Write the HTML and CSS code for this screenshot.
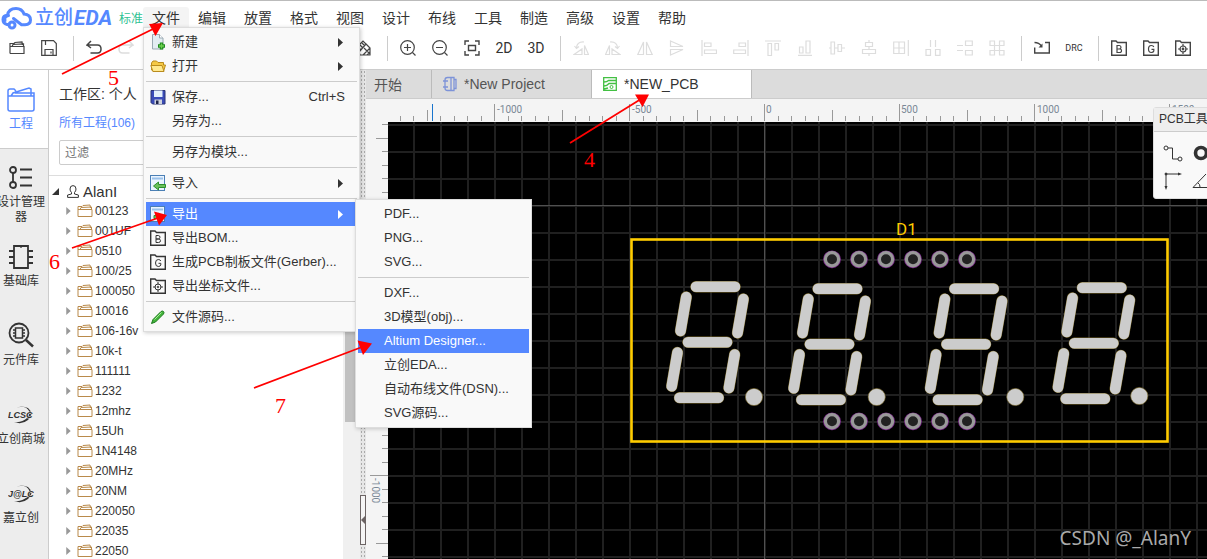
FILE: index.html
```html
<!DOCTYPE html>
<html lang="zh-CN">
<head>
<meta charset="utf-8">
<title>立创EDA</title>
<link rel="stylesheet" href="styles.css">
</head>
<body>
<svg class="defs" width="0" height="0" aria-hidden="true">
  <defs>
    <symbol id="folder" viewBox="0 0 16 16"><path d="M1 13.500V3.500H5L6 2.500L13 2L13.500 5M1 6.500H15V13.500H1M3 6.500L4 4.500L14.500 4V6.500"/></symbol>
    <symbol id="boxB" viewBox="0 0 16 16"><path d="M.7 15.300V1H5L6.500 2.500H15.300V15.300Z" stroke-width="1.400"/><path d="M6 5.500V12.500H8.500Q10.500 12.500 10.500 10.700T8.500 9H6H8.300Q10 8.800 10 7.200T8.300 5.500Z"/></symbol>
    <symbol id="boxG" viewBox="0 0 16 16"><path d="M.7 15.300V1H5L6.500 2.500H15.300V15.300Z" stroke-width="1.400"/><path d="M10.800 7Q10.300 5.500 8.300 5.500Q5.500 5.500 5.500 9T8.300 12.500Q10.300 12.500 10.800 11V9.300H8.500"/></symbol>
    <symbol id="boxT" viewBox="0 0 16 16"><path d="M.7 15.300V1H5L6.500 2.500H15.300V15.300Z" stroke-width="1.400"/><circle cx="8" cy="9" r="3"/><circle cx="8" cy="9" r=".8"/><path d="M8 4V6.500M8 11.500V14M3 9H5.500M10.500 9H13"/></symbol>
    <symbol id="caret" viewBox="0 0 5 9"><path d="M0 0L5 4.500L0 9Z"/></symbol>
    <symbol id="sheet" viewBox="0 0 16 16"><rect x=".5" y=".5" width="14" height="15" fill="#eaf4ff" stroke="#4b7fb5"/><path d="M2 3.500H13" stroke="#9bc2ea" stroke-width="2"/></symbol>
    <g id="segments">
      <path d="M696 286.700H735M688 342.300H727M679.500 397.700H718.500"/>
      <path d="M686.300 297L680.500 331M743.400 299L737.500 333M677.500 352.500L671.700 386.300M734.700 354.500L728.900 388"/>
    </g>
    <g id="digit"><use href="#segments" class="seg-edge"/><use href="#segments" class="seg-face"/></g>
    <g id="pads">
      <circle cx="832" cy="0" r="6.600"/><circle cx="859" cy="0" r="6.600"/><circle cx="886" cy="0" r="6.600"/>
      <circle cx="913" cy="0" r="6.600"/><circle cx="940" cy="0" r="6.600"/><circle cx="967" cy="0" r="6.600"/>
    </g>
    <pattern id="grid" x="764" y="205" width="27" height="27" patternUnits="userSpaceOnUse"><path d="M0 0H27V2H2V27H0Z" fill="#202020"/></pattern>
    <pattern id="hticks" x="128" y="0" width="135" height="23" patternUnits="userSpaceOnUse">
      <path d="M.5 5V22M14.500 17V22M27.500 17V22M41.500 17V22M54.500 17V22M68.500 11V22M81.500 17V22M95.500 17V22M108.500 17V22M122.500 17V22" stroke="#999"/>
    </pattern>
    <pattern id="vticks" x="0" y="83" width="22" height="135" patternUnits="userSpaceOnUse">
      <path d="M4 .5H22M16 14.500H22M16 27.500H22M16 41.500H22M16 54.500H22M10 68.500H22M16 81.500H22M16 95.500H22M16 108.500H22M16 122.500H22" stroke="#999"/>
    </pattern>
  </defs>
</svg>

<div class="app">
  <header class="menubar">
    <div class="logo">
      <svg class="cloud" width="31" height="24" viewBox="0 0 31 24"><path d="M8 18.500H6Q2 17.500 2 13.500T6.500 9.300Q7.500 2.500 15 2.500Q21 2.500 23 8Q29.500 8.500 29.500 14Q29.500 18.500 24 18.800H20.500L12.500 12.500"/><circle cx="11" cy="19" r="3"/><path d="M4 14.500Q3 10.500 7.500 9.500"/></svg>
      <span class="brand">立创<b>EDA</b></span><span class="edition">标准</span>
    </div>
    <nav class="menus">
      <div class="menu-root">
        <button class="open">文件</button>
        <div class="menu">
          <button><svg width="16" height="16" viewBox="0 0 16 16"><path d="M2.500.5H9.500L13 4V15H2.500Z" fill="#e3edf2" stroke="#9aa9b2"/><path d="M9.500.5V4H13" fill="#fff" stroke="#9aa9b2"/><path d="M11.500 8.500V15.500M8 12H15" stroke="#1d8a1d" stroke-width="3.400"/><path d="M11.500 9.500V14.500M9 12H14" stroke="#6fd04f" stroke-width="1.400"/></svg>新建<svg class="more"><use href="#caret"/></svg></button>
          <button><svg width="16" height="16" viewBox="0 0 16 16"><path d="M1.500 12V5L3 3H6.500L8 4.500H13.500V7H15.500L13.500 13.500H3.500Z" fill="#f5c945" stroke="#b98b1d"/><path d="M.8 7.500H12L14 13.500H3Z" fill="#ffe98f" stroke="#b98b1d"/></svg>打开<svg class="more"><use href="#caret"/></svg></button>
          <hr>
          <button><svg width="16" height="16" viewBox="0 0 16 16"><path d="M1 1.500H15V15H2.500L1 13.500Z" fill="#3a4cb8" stroke="#2b3475"/><rect x="4" y="1.500" width="8.500" height="6.500" fill="#e4f1fb"/><rect x="4.500" y="10.500" width="7.500" height="4.500" fill="#cfd3dc"/><rect x="6" y="11.500" width="2.500" height="3.500" fill="#1c2348"/></svg>保存...<kbd>Ctrl+S</kbd></button>
          <button><i></i>另存为...</button>
          <hr>
          <button><i></i>另存为模块...</button>
          <hr>
          <button><svg width="16" height="16" viewBox="0 0 16 16"><use href="#sheet"/><path d="M3.500 11L8.500 7V9.500H15.500V12.500H8.500V15Z" fill="#69c05b" stroke="#2c8f2c"/></svg>导入<svg class="more"><use href="#caret"/></svg></button>
          <hr>
          <button class="active"><svg width="16" height="16" viewBox="0 0 16 16"><use href="#sheet"/><path d="M13 11L8 7V9.500H4V12.500H8V15Z" fill="#69c05b" stroke="#2c8f2c"/></svg>导出<svg class="more"><use href="#caret"/></svg></button>
          <button><svg class="line" width="16" height="16"><use href="#boxB"/></svg>导出BOM...</button>
          <button><svg class="line" width="16" height="16"><use href="#boxG"/></svg>生成PCB制板文件(Gerber)...</button>
          <button><svg class="line" width="16" height="16"><use href="#boxT"/></svg>导出坐标文件...</button>
          <hr>
          <button><svg width="16" height="16" viewBox="0 0 16 16"><path d="M1.500 14.500L3 10.500L11 2.500Q12.500 1.500 13.500 2.500T13.500 5L5.500 13Z" fill="#43b53b" stroke="#1c7a1c"/><path d="M4.500 10.500L11.500 3.500" stroke="#a9ec9a"/></svg>文件源码...</button>
          <div class="menu submenu">
            <button><i></i>PDF...</button>
            <button><i></i>PNG...</button>
            <button><i></i>SVG...</button>
            <hr>
            <button><i></i>DXF...</button>
            <button><i></i>3D模型(obj)...</button>
            <button class="active"><i></i>Altium Designer...</button>
            <button><i></i>立创EDA...</button>
            <button><i></i>自动布线文件(DSN)...</button>
            <button><i></i>SVG源码...</button>
          </div>
        </div>
      </div>
      <button>编辑</button><button>放置</button><button>格式</button><button>视图</button><button>设计</button><button>布线</button><button>工具</button><button>制造</button><button>高级</button><button>设置</button><button>帮助</button>
    </nav>
  </header>

  <div class="toolbar">
    <button aria-label="打开"><svg viewBox="0 0 16 16"><use href="#folder"/></svg></button>
    <button aria-label="保存"><svg viewBox="0 0 16 16"><path d="M.7.700H12.500L15.300 3.500V15.300H.7ZM4 15V9.500H12V15M4.500 1V5M10 11.500V13.500"/></svg></button>
    <span class="sep"></span>
    <button aria-label="撤销"><svg viewBox="0 0 16 16"><path d="M5 1L1 5H11.500Q15 5 15 9T11.500 13H4.500M1 5L5 8" stroke-width="1.500"/></svg></button>
    <button aria-label="重做" disabled><svg viewBox="0 0 16 16"><path d="M11 1L15 5H4.500Q1 5 1 9T4.500 13H11.500M15 5L11 8" stroke-width="1.500"/></svg></button>
    <span class="under-menu"></span>
    <button aria-label="画笔"><svg viewBox="0 0 16 16"><path d="M1 8L8 1L11 4L4 12ZM4 12L11 4L15 8V15H5ZM3 7L6 10M5 5L8 8M7 3L10 6M8 15L15 8M12 15L15 12M9 8L15 14"/></svg></button>
    <span class="sep"></span>
    <button aria-label="放大"><svg viewBox="0 0 16 16"><circle cx="7.500" cy="7.500" r="6.800"/><path d="M4 7.500H11M7.500 4V11M12.500 12.500L15.500 15.500"/></svg></button>
    <button aria-label="缩小"><svg viewBox="0 0 16 16"><circle cx="7.500" cy="7.500" r="6.800"/><path d="M4 7.500H11M12.500 12.500L15.500 15.500"/></svg></button>
    <button aria-label="适合窗口"><svg viewBox="0 0 16 16"><path d="M5 1H1V5M11 1H15V5M1 11V15H5M15 11V15H11M4.500 5.500H11.500V10.500H4.500Z" stroke-width="1.400"/></svg></button>
    <button>2D</button>
    <button>3D</button>
    <span class="sep"></span>
    <button disabled aria-label="左旋"><svg viewBox="0 0 16 16"><path d="M1 14.500L9 9V14.500ZM11.500 5.500L15.500 14.500H11.500ZM3.500 8Q4 1.500 11 2M1.500 6L3.500 8.500L6 6.500"/></svg></button>
    <button disabled aria-label="右旋"><svg viewBox="0 0 16 16"><path d="M15 14.500L7 9V14.500ZM4.500 5.500L.5 14.500H4.500ZM12.500 8Q12 1.500 5 2M14.500 6L12.500 8.500L10 6.500"/></svg></button>
    <button disabled aria-label="水平翻转"><svg viewBox="0 0 16 16"><path d="M6.500 2V14.500H.8ZM9.500 2V14.500H15.200Z"/></svg></button>
    <button disabled aria-label="垂直翻转"><svg viewBox="0 0 16 16"><path d="M1.500 1L14 6.500H1.500ZM1.500 15L14 9.500H1.500Z"/></svg></button>
    <button disabled aria-label="左对齐"><svg viewBox="0 0 16 16"><path d="M1 0V16M3.500 3H10V6.500H3.500ZM3.500 10H15.500V13.500H3.500Z"/></svg></button>
    <button disabled aria-label="右对齐"><svg viewBox="0 0 16 16"><path d="M15 0V16M6 3H12.500V6.500H6ZM.7 10H12.500V13.500H.7Z"/></svg></button>
    <button disabled aria-label="上对齐"><svg viewBox="0 0 16 16"><path d="M0 1H16M3 3.500H6.500V15.500H3ZM10 3.500H13.500V10H10Z"/></svg></button>
    <button disabled aria-label="下对齐"><svg viewBox="0 0 16 16"><path d="M1 15.300H15M2.500 7H6V13H2.500ZM9 1H13V13H9Z"/></svg></button>
    <button disabled aria-label="水平居中"><svg viewBox="0 0 16 16"><path d="M0 8H2M2 2H5.500V14H2ZM5.500 8H9M9 4.500H12.500V11.500H9ZM12.500 8H16"/></svg></button>
    <button disabled aria-label="垂直居中"><svg viewBox="0 0 16 16"><path d="M8 0V2.500M4.500 2.500H11.500V6.500H4.500ZM8 6.500V9.500M1.500 9.500H14.500V13.500H1.500ZM8 13.500V16"/></svg></button>
    <button disabled aria-label="网格对齐"><svg viewBox="0 0 16 16"><path d="M.7 2H11.500V13.500H.7ZM6 2V13.500M.7 8H11.500M15.300 0V16"/></svg></button>
    <button disabled aria-label="水平分布"><svg viewBox="0 0 16 16"><path d="M5.500 0V7M10.500 0V7M1 9.500H5.500V15.300H1ZM10.500 9.500H15V15.300H10.500Z"/></svg></button>
    <button disabled aria-label="垂直分布"><svg viewBox="0 0 16 16"><path d="M0 5.500H6M0 10.500H6M8.500 1H15.300V5.500H8.500ZM8.500 10.500H15.300V15H8.500Z"/></svg></button>
    <button disabled aria-label="阵列"><svg viewBox="0 0 16 16"><path d="M1 1H5.500V5.500H1ZM10.500 1H15V5.500H10.500ZM1 10.500H5.500V15H1ZM10.500 10.500H15V15H10.500ZM5.500 5.500H10.500V10.500H5.500Z"/></svg></button>
    <span class="sep"></span>
    <button aria-label="导入变更"><svg viewBox="0 0 16 16"><path d="M.7 7.500V13H15.300V2.500H11M.5 2.500Q5 2.500 7.500 6" stroke-width="1.400"/><path d="M8.500 3.500V7.500H4.500Z" fill="#444" stroke="none"/></svg></button>
    <button class="drc">DRC</button>
    <span class="sep"></span>
    <button aria-label="BOM"><svg><use href="#boxB"/></svg></button>
    <button aria-label="Gerber"><svg><use href="#boxG"/></svg></button>
    <button aria-label="坐标"><svg><use href="#boxT"/></svg></button>
  </div>

  <div class="body">
    <nav class="rail">
      <button class="current"><svg width="28" height="26" viewBox="0 0 28 26"><path d="M1 9H27V22Q27 24 25 24H3Q1 24 1 22ZM1 9V4Q1 2 3 2H7L9 4M4 9L6 6L22 1L24 2V9M8 6H27V9"/></svg>工程</button>
      <button><svg width="26" height="24" viewBox="0 0 26 24"><circle cx="5" cy="4" r="3"/><circle cx="5" cy="19" r="3"/><path d="M5 7V16M12 3.500H24M12 11.500H24M12 19.500H24"/></svg><span>设计管理<br>器</span></button>
      <button><svg width="26" height="24" viewBox="0 0 26 24"><path d="M6 1H20V23H6ZM1 6H6M1 12H6M1 18H6M20 6H25M20 12H25M20 18H25"/><path d="M11 1Q13 4 15 1" stroke-width="1"/></svg>基础库</button>
      <button class="search"><svg width="28" height="26" viewBox="0 0 28 26"><circle cx="12" cy="11" r="9.500"/><path d="M8.500 6H15.500V16H8.500ZM6 8H8.500M6 11H8.500M6 14H8.500M15.500 8H18M15.500 11H18M15.500 14H18" stroke-width="1.500"/><path d="M19 18L26 24.500" stroke-width="2.500"/></svg>元件库</button>
      <button><svg class="seal" width="26" height="20" viewBox="0 0 26 20"><path d="M4 5Q12-1 20 3Q27 9 20 15Q14 20 6 17Q15 18 20 12Q24 5 16 2Q10 1 4 5Z"/><text x="0" y="13">LCSC</text></svg>立创商城</button>
      <button><svg class="seal" width="26" height="20" viewBox="0 0 26 20"><path d="M4 5Q12-1 20 3Q27 9 20 15Q14 20 6 17Q15 18 20 12Q24 5 16 2Q10 1 4 5Z"/><text x="0" y="13">J@LC</text></svg>嘉立创</button>
    </nav>

    <aside class="panel">
      <div class="panel-head">
        <div class="workspace-name">工作区: 个人</div>
        <a href="#all">所有工程(106)</a>
        <input type="text" placeholder="过滤" aria-label="过滤">
      </div>
      <div class="tree-area">
        <div class="tree">
          <div class="owner"><svg width="7" height="7" viewBox="0 0 7 7"><path d="M7 0V7H0Z" fill="#333"/></svg><svg class="line" width="12" height="13" viewBox="0 0 12 13"><path d="M6 .6Q9 .6 9 4Q9 6 7.500 7.500V9L11.400 10V12.400H.6V10L4.500 9V7.500Q3 6 3 4Q3 .6 6 .6Z"/></svg>AlanI</div>
          <ul>
            <li><svg class="tw"><use href="#caret"/></svg><svg class="fd"><use href="#folder"/></svg>00123</li>
            <li><svg class="tw"><use href="#caret"/></svg><svg class="fd"><use href="#folder"/></svg>001UF</li>
            <li><svg class="tw"><use href="#caret"/></svg><svg class="fd"><use href="#folder"/></svg>0510</li>
            <li><svg class="tw"><use href="#caret"/></svg><svg class="fd"><use href="#folder"/></svg>100/25</li>
            <li><svg class="tw"><use href="#caret"/></svg><svg class="fd"><use href="#folder"/></svg>100050</li>
            <li><svg class="tw"><use href="#caret"/></svg><svg class="fd"><use href="#folder"/></svg>10016</li>
            <li><svg class="tw"><use href="#caret"/></svg><svg class="fd"><use href="#folder"/></svg>106-16v</li>
            <li><svg class="tw"><use href="#caret"/></svg><svg class="fd"><use href="#folder"/></svg>10k-t</li>
            <li><svg class="tw"><use href="#caret"/></svg><svg class="fd"><use href="#folder"/></svg>111111</li>
            <li><svg class="tw"><use href="#caret"/></svg><svg class="fd"><use href="#folder"/></svg>1232</li>
            <li><svg class="tw"><use href="#caret"/></svg><svg class="fd"><use href="#folder"/></svg>12mhz</li>
            <li><svg class="tw"><use href="#caret"/></svg><svg class="fd"><use href="#folder"/></svg>15Uh</li>
            <li><svg class="tw"><use href="#caret"/></svg><svg class="fd"><use href="#folder"/></svg>1N4148</li>
            <li><svg class="tw"><use href="#caret"/></svg><svg class="fd"><use href="#folder"/></svg>20MHz</li>
            <li><svg class="tw"><use href="#caret"/></svg><svg class="fd"><use href="#folder"/></svg>20NM</li>
            <li><svg class="tw"><use href="#caret"/></svg><svg class="fd"><use href="#folder"/></svg>220050</li>
            <li><svg class="tw"><use href="#caret"/></svg><svg class="fd"><use href="#folder"/></svg>22035</li>
            <li><svg class="tw"><use href="#caret"/></svg><svg class="fd"><use href="#folder"/></svg>22050</li>
          </ul>
        </div>
        <div class="track"><div class="thumb"></div></div>
      </div>
    </aside>

    <div class="splitter"><button aria-label="收起"><svg width="4" height="8" viewBox="0 0 4 8"><path d="M4 0V8L0 4Z" fill="#6b6363"/></svg></button></div>

    <main class="editor">
      <div class="tabs">
        <button>开始</button>
        <button class="doc"><svg width="16" height="16" viewBox="0 0 16 16"><path d="M9 1.500H5.500Q3 1.500 3 4V12Q3 14.500 5.500 14.500H9M9 1.500H12V14.500H9ZM1 5H6M1 11H6M12 3.500H14V12.500H12" stroke="#7d93d8" fill="none" stroke-width="1.300"/></svg>*New Project</button>
        <button class="doc current"><svg width="16" height="16" viewBox="0 0 16 16"><path d="M1.700 1.700H14.300V14.300H1.700ZM2 6Q5 6 6.500 4.500H14M2 10Q5 10 7 7.500H14M2 13L6 12" stroke="#43c043" fill="none" stroke-width="1.300"/><circle cx="9.500" cy="11" r="1.500" stroke="#43c043" fill="none"/></svg>*NEW_PCB</button>
      </div>
      <div class="workspace">
        <svg class="ruler-h">
          <rect width="100%" height="23" fill="#f4f4f4"/>
          <rect x="22" width="100%" height="23" fill="url(#hticks)"/>
          <path d="M66.500 5V22" stroke="#1874cd"/>
          <g class="marks"><text x="131" y="14">-1000</text><text x="266" y="14">-500</text><text x="400" y="14">0</text><text x="535" y="14">500</text><text x="671" y="14">1000</text><text x="806" y="14">1500</text></g>
        </svg>
        <svg class="ruler-v">
          <rect width="22" height="100%" fill="#f4f4f4"/>
          <rect width="22" height="100%" fill="url(#vticks)"/>
          <text class="marks" transform="translate(6 356) rotate(90)">-1000</text>
        </svg>
        <svg class="board">
          <g transform="translate(-388 -122)">
            <rect x="388" y="122" width="4000" height="3000" fill="#000"/>
            <rect x="388" y="122" width="4000" height="3000" fill="url(#grid)"/>
            <path d="M764.500 122V3000M388 205.500H4000" stroke="#505050"/>
            <rect x="631.500" y="239.500" width="536" height="202" fill="none" stroke="#fc0" stroke-width="2.600"/>
            <text class="ref" x="896" y="235">D1</text>
            <use href="#pads" y="259.300" class="pad-edge"/><use href="#pads" y="259.300" class="pad"/>
            <use href="#pads" y="421.300" class="pad-edge"/><use href="#pads" y="421.300" class="pad"/>
            <use href="#digit"/><use href="#digit" x="122" y="2"/><use href="#digit" x="258.600" y="2"/><use href="#digit" x="386.300" y="1"/>
            <g fill="#ccc" stroke="#7d6b2a" stroke-width=".6"><circle cx="754" cy="397" r="8.600"/><circle cx="876.700" cy="397" r="8.600"/><circle cx="1015.300" cy="397" r="8.600"/><circle cx="1139.300" cy="396" r="8.600"/></g>
          </g>
        </svg>
        <section class="tools">
          <h2>PCB工具</h2>
          <div class="tool-grid">
            <button aria-label="导线"><svg viewBox="0 0 20 18"><circle cx="3" cy="3" r="2"/><path d="M5 3H9.500V14H15"/><circle cx="17" cy="14" r="2"/></svg></button>
            <button aria-label="焊盘"><svg viewBox="0 0 20 18"><circle cx="9" cy="8" r="5.500" stroke-width="3.600"/></svg></button>
            <button aria-label="坐标原点"><svg viewBox="0 0 20 18"><path d="M3 15V2H16"/><path d="M15 .5L19 2L15 3.500ZM1.500 14L3 18L4.500 14Z" fill="#333" stroke="none"/><circle cx="3" cy="2" r="1" fill="#333"/></svg></button>
            <button aria-label="量角器"><svg viewBox="0 0 20 18"><path d="M14 2L1 15.500H19M6 11Q8 12 8 15"/></svg></button>
          </div>
        </section>
        <div class="watermark">CSDN @_AlanY</div>
      </div>
    </main>
  </div>

  <svg class="notes">
    <path d="M62 74L155 28M570 143L641 99M72 248L158 218M254 388L362 347" stroke="red" stroke-width="1.800"/>
    <path d="M163 23L149 24L155.500 36ZM649 94.500L635 94.500L642.500 107ZM167 215L154 211.500L159 225.500ZM372 343.500L357.500 340.500L363 355Z" fill="red"/>
    <text x="108" y="85">5</text><text x="584" y="167">4</text><text x="49" y="269">6</text><text x="275" y="413">7</text>
  </svg>
</div>
</body>
</html>
```
FILE: styles.css
```css
* { box-sizing: border-box; }
body {
  margin: 0;
  font: 14px "Liberation Sans", "Noto Sans CJK SC", sans-serif;
  color: #333;
  background: #fff;
}
button {
  border: 0;
  padding: 0;
  background: none;
  font: inherit;
  color: inherit;
}
.defs { position: absolute; }
.app {
  position: relative;
  display: flex;
  flex-direction: column;
  height: 100vh;
  overflow: hidden;
}
.line { fill: none; stroke: #333; }

/* menu bar */
.menubar {
  display: flex;
  height: 28px;
  border-top: 1px solid #bbb;
}
.logo {
  display: flex;
  align-items: center;
  flex: none;
  width: 143px;
  padding: 6px 0 0 1px;
  color: #58f;
}
.cloud { flex: none; fill: none; stroke: #58f; stroke-width: 3; stroke-linecap: round; }
.brand { display: flex; align-items: center; margin-left: 3px; font-size: 19px; font-weight: 500; line-height: 20px; white-space: nowrap; }
.brand b { margin-left: 1px; font: italic 700 21px/20px Roboto, sans-serif; }
.edition { margin-left: auto; padding-top: 2px; font-size: 12px; line-height: 20px; color: #2fc293; white-space: nowrap; }
.menus { display: flex; padding-top: 6px; }
.menus > button, .menu-root > button { flex: none; height: 21px; padding: 0 9px; line-height: 22px; }
.menu-root { position: relative; }
.menu-root > .open { background: #f4f4f4; border-radius: 3px 3px 0 0; }
.menu {
  position: absolute;
  z-index: 5;
  top: 20px;
  left: 0;
  width: 217px;
  padding: 2px;
  border: 1px solid #ddd;
  background: #f9f9f9;
  box-shadow: 1px 1px 4px #0003;
}
.menu > button {
  display: flex;
  align-items: center;
  width: 100%;
  height: 24px;
  padding-left: 4px;
  font-size: 13px;
  line-height: 24px;
  white-space: nowrap;
}
.menu > button > :first-child { flex: none; width: 16px; margin-right: 6px; fill: none; }
.menu hr { margin: 3px 0; border: 0; border-top: 1px solid #ccc; }
.menu > .active { background: #58f; color: #fff; }
.menu .more { width: 5px; height: 9px; margin: 0 14px 0 auto; fill: currentColor; }
.menu kbd { margin: 0 12px 0 auto; font: inherit; }
.submenu { top: 171px; left: 211px; width: 177px; }

/* tool bar */
.toolbar {
  display: flex;
  align-items: center;
  height: 42px;
  padding-left: 1px;
  border-bottom: 1px solid #ccc;
}
.toolbar button {
  display: flex;
  align-items: center;
  justify-content: center;
  flex: none;
  width: 32px;
  height: 34px;
  padding-bottom: 2px;
  font: 14px Roboto, sans-serif;
}
.toolbar svg { width: 16px; height: 16px; fill: none; stroke: #444; stroke-width: 1.200; }
.toolbar button:disabled svg { stroke: #ddd; }
.toolbar .drc { font-size: 9px; }
.sep { flex: none; width: 13px; height: 25px; background: linear-gradient(#ccc, #ccc) 8px 0 / 1px 100% no-repeat; }
.under-menu { flex: none; width: 205px; }

.body { display: flex; flex: 1; min-height: 0; }

/* left rail */
.rail { flex: none; width: 49px; background: #ededed; border-right: 1px solid #ccc; overflow: hidden; }
.rail button {
  display: flex;
  flex-direction: column;
  align-items: center;
  width: 49px;
  height: 79px;
  padding: 17px 7px 0 0;
  font-size: 12px;
  line-height: 15px;
  white-space: nowrap;
}
.rail svg { flex: none; margin-bottom: 5px; fill: none; stroke: #333; stroke-width: 1.800; }
.rail .current { background: #fff; color: #58f; border-bottom: 1px solid #ccc; }
.rail .current svg { stroke: #58f; margin-bottom: 4px; stroke-width: 1.500; }
.rail .search { padding-top: 15px; }
.rail .seal { margin: 2px 0 7px; fill: #333; stroke: none; }
.seal text { font: italic 700 9px "Liberation Sans", sans-serif; stroke: #ededed; stroke-width: 1; paint-order: stroke; }

/* project panel */
.panel { display: flex; flex-direction: column; flex: none; width: 311px; }
.panel-head { padding: 12px 10px 10px; border-bottom: 1px solid #ddd; }
.workspace-name { line-height: 24px; }
.panel-head a { display: block; margin: 7px 0; font-size: 12px; line-height: 20px; color: #58f; text-decoration: none; }
.panel-head input {
  display: block;
  width: 100%;
  height: 25px;
  padding: 0 5px;
  border: 1px solid #ccc;
  border-radius: 2px;
  font: 12px "Liberation Sans", "Noto Sans CJK SC", sans-serif;
}
.tree-area { display: flex; flex: 1; min-height: 0; }
.tree { flex: 1; padding-top: 5px; overflow: hidden; }
.tree ul { margin: 0; padding: 0; list-style: none; }
.owner { display: flex; align-items: center; height: 20px; padding-left: 3px; font-size: 15px; }
.owner svg + svg { margin: 0 4px 0 8px; }
.tree li { display: flex; align-items: center; height: 20px; padding-left: 17px; font-size: 12px; }
.tw { width: 5px; height: 8px; margin-right: 6px; fill: #999; }
.fd { width: 16px; height: 16px; margin-right: 2px; fill: none; stroke: #b98a4b; }
.track { width: 17px; padding-left: 2px; background: #f0f0f0; }
.thumb { width: 13px; height: 246px; background: #c1c1c1; }

/* splitter */
.splitter {
  display: flex;
  align-items: flex-end;
  flex: none;
  width: 6px;
  padding-bottom: 14px;
  background: radial-gradient(circle, #aaa 1px, #e6e6e6 1px) 0 0 / 3px 4px;
}
.splitter button { display: flex; align-items: center; justify-content: flex-end; width: 6px; height: 50px; border: 1px solid #6b6363; background: #f4f4f4; }

/* editor */
.editor { display: flex; flex-direction: column; flex: 1; min-width: 0; }
.tabs { display: flex; height: 29px; background: #dcdcdc; border-bottom: 1px solid #ccc; color: #555; }
.tabs button { display: flex; align-items: center; padding: 0 29px 0 8px; border-right: 1px solid #bbb; }
.tabs .doc { width: 160px; padding: 0 0 0 10px; }
.tabs .doc svg { margin-right: 6px; }
.tabs .current { height: 28px; background: #fff; color: #333; }
.workspace {
  position: relative;
  display: grid;
  grid-template: 23px 1fr / 22px 1fr;
  flex: 1;
  min-height: 0;
  overflow: hidden;
}
.workspace > svg { width: 100%; height: 100%; min-height: 0; }
.ruler-h { grid-column: 1 / 3; }
.marks { font: 10px Roboto, sans-serif; fill: #7a8896; }
.board { background: #000; }
.ref { font: 400 17px Roboto, sans-serif; fill: #fc0; }
.seg-edge { fill: none; stroke: #7d6b2a; stroke-width: 11.400; stroke-linecap: round; }
.seg-face { fill: none; stroke: #ccc; stroke-width: 10.600; stroke-linecap: round; }
.pad-edge { fill: none; stroke: #7b2a8b; stroke-width: 4.600; }
.pad { fill: #222; stroke: #999; stroke-width: 3.200; }

.tools {
  position: absolute;
  top: 8px;
  right: -40px;
  width: 94px;
  height: 92px;
  border: 1px solid #ddd;
  border-radius: 3px;
  background: #f9f9f9;
}
.tools h2 { margin: 0; padding-left: 5px; border-bottom: 1px solid #ccc; background: #eee; font-size: 12px; font-weight: 400; line-height: 23px; }
.tool-grid { display: grid; grid-template-columns: 29px 29px; gap: 9px 0; padding: 13px 0 0 9px; }
.tool-grid button { display: flex; }
.tool-grid svg { width: 20px; height: 18px; fill: none; stroke: #333; }
.watermark {
  position: absolute;
  right: 16px;
  bottom: 8px;
  font: 19px/26px "Noto Sans", sans-serif;
  color: #aaa;
}

/* step arrows over the whole window */
.notes { position: absolute; z-index: 10; inset: 0; width: 100%; height: 100%; pointer-events: none; }
.notes text { font: 22px "Liberation Serif", serif; fill: red; }
```
